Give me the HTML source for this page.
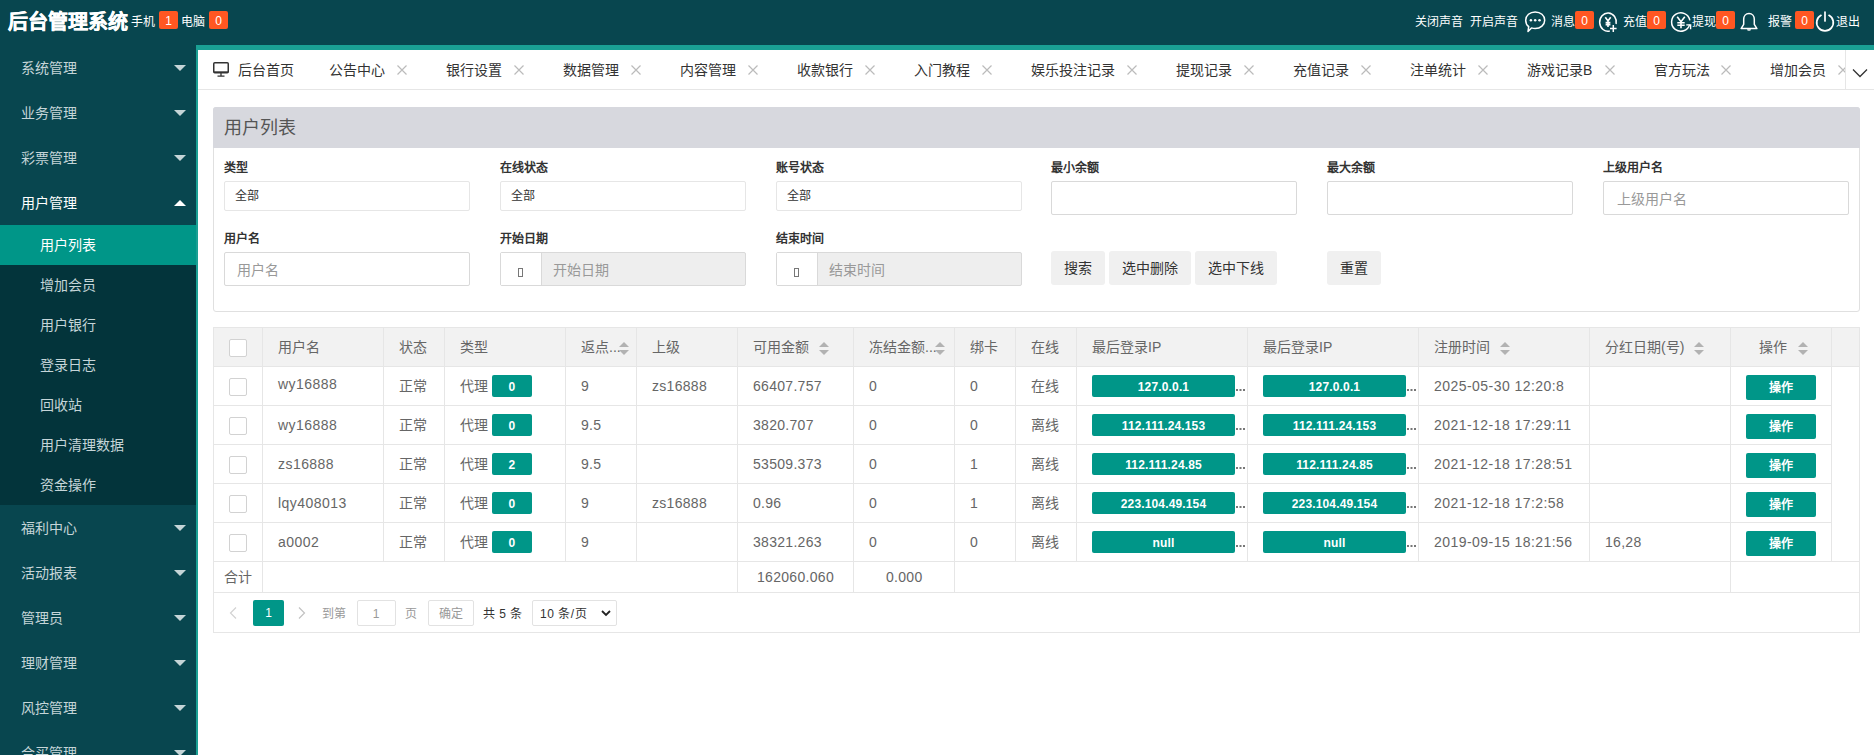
<!DOCTYPE html><html lang="zh-CN"><head><meta charset="utf-8"><title>后台管理系统</title><style>
*{box-sizing:border-box;margin:0;padding:0}
html,body{width:1874px;height:755px;overflow:hidden;background:#fff}
body{font-family:"Liberation Sans",sans-serif;font-size:14px;color:#333;position:relative}
.abs{position:absolute}
#hdr{position:absolute;left:0;top:0;width:1874px;height:45px;background:#08464F}
#side{position:absolute;left:0;top:45px;width:196px;height:710px;background:#08464F;overflow:hidden}
#tealT{position:absolute;left:196px;top:45px;width:1678px;height:5px;background:#1AA094}
#tealL{position:absolute;left:196px;top:45px;width:2px;height:710px;background:#1AA094}
.t{position:absolute;white-space:nowrap;line-height:1}
.w{color:#fff}
.badge{position:absolute;background:#FF5722;color:#fff;font-size:12px;text-align:center;border-radius:2px;width:19px;height:18px;line-height:20px;top:11px}
.mi{position:absolute;left:0;width:196px;height:45px;color:#c5d5d8;font-size:14px;line-height:47px;padding-left:20.500px}
.mi.on{color:#fff}
.smi{position:absolute;left:0;width:196px;height:40px;color:#c5d5d8;font-size:14px;line-height:40px;padding-left:40px;background:#03343B}
.smi.on{background:#009688;color:#fff}
.arr{position:absolute;left:174px;width:0;height:0;border-left:6px solid transparent;border-right:6px solid transparent;border-top:6px solid #c5d5d8}
.arr.up{border-top:none;border-bottom:6px solid #fff}
.tab{position:absolute;top:50px;height:39px;line-height:41px;font-size:14px;color:#333;white-space:nowrap}
.x{position:absolute;top:65px;width:10px;height:10px}
.lbl{position:absolute;font-size:12px;font-weight:bold;color:#333;line-height:12px;white-space:nowrap}
.inp{position:absolute;border:1px solid #e6e6e6;border-radius:2px;background:#fff;width:246px}
.btn{position:absolute;top:251px;height:34px;line-height:34px;background:#f0f0f0;border-radius:3px;text-align:center;font-size:14px;color:#333}
.vl{position:absolute;width:1px;background:#e6e6e6}
.hl{position:absolute;height:1px;background:#e6e6e6;left:213px;width:1647px}
.th{position:absolute;top:328px;height:38px;line-height:38px;font-size:14px;color:#666;white-space:nowrap}
.td{position:absolute;height:38px;line-height:38px;font-size:14px;color:#666;white-space:nowrap;letter-spacing:.3px}
.cb{position:absolute;left:229px;width:18px;height:18px;border:1px solid #d2d2d2;border-radius:2px;background:#fff}
.gb{position:absolute;background:#009688;color:#fff;font-size:12px;font-weight:bold;letter-spacing:.15px;text-align:center;border-radius:2px;height:22px;line-height:24px;white-space:nowrap}
.sa{position:absolute;width:0;height:0;border-left:5px solid transparent;border-right:5px solid transparent}
.sa.u{border-bottom:5px solid #b2b2b2}
.sa.d{border-top:5px solid #b2b2b2}
</style></head><body>
<div id="hdr">
<div class="t w" style="left:8px;top:12px;font-size:20px;font-weight:bold;-webkit-text-stroke:.4px #fff">后台管理系统</div>
<div class="t w" style="left:131px;top:16px;font-size:12px">手机</div>
<div class="badge" style="left:159px">1</div>
<div class="t w" style="left:181px;top:16px;font-size:12px">电脑</div>
<div class="badge" style="left:209px">0</div>
<div class="t w" style="left:1415px;top:16px;font-size:12px">关闭声音</div>
<div class="t w" style="left:1470px;top:16px;font-size:12px">开启声音</div>
<svg class="abs" style="left:1524px;top:10px" width="22" height="23" viewBox="0 0 22 23" fill="none" stroke="#fff" stroke-width="1.5" stroke-linejoin="round"><path d="M11.2 1.9c5.3 0 9.500 3.600 9.500 8.300s-4.200 8.300-9.500 8.300c-1.300 0-2.600-.2-3.700-.6L4 21.500l.7-4.800C2.800 15.200 1.700 12.900 1.700 10.200 1.700 5.500 5.900 1.900 11.200 1.900z"/><circle cx="6.900" cy="10.300" r="1.250" fill="#fff" stroke="none"/><circle cx="11.200" cy="10.300" r="1.250" fill="#fff" stroke="none"/><circle cx="15.500" cy="10.300" r="1.250" fill="#fff" stroke="none"/></svg>
<div class="t w" style="left:1551px;top:16px;font-size:12px">消息</div>
<div class="badge" style="left:1575px">0</div>
<svg class="abs" style="left:1598px;top:10px" width="21" height="23" viewBox="0 0 21 23" fill="none" stroke="#fff" stroke-width="1.500"><path d="M18.100 14A8.300 9.200 0 1 0 11.800 21.100"/><path d="M7.300 7.200l2.700 3.700 2.700-3.700M10 10.900v6M7.600 12.600h4.800M7.600 14.600h4.800" stroke-width="1.600"/><path d="M15.300 15v7M12 18.400h6.600" stroke-width="1.500"/></svg>
<div class="t w" style="left:1623px;top:16px;font-size:12px">充值</div>
<div class="badge" style="left:1647px">0</div>
<svg class="abs" style="left:1670px;top:11px" width="23" height="22" viewBox="0 0 23 22" fill="none" stroke="#fff" stroke-width="1.500"><path d="M19.860 9.300A9.200 9.200 0 1 0 19.650 13.600"/><path d="M16.300 13.900H20.600V18.200" stroke-width="1.400"/><path d="M7.200 5.800l3.800 5 3.800-5M11 10.800v6.400M7.300 11.700h7.400M7.300 14.300h7.400" stroke-width="1.600"/></svg>
<div class="t w" style="left:1692px;top:16px;font-size:12px">提现</div>
<div class="badge" style="left:1716px">0</div>
<svg class="abs" style="left:1739px;top:11px" width="20" height="22" viewBox="0 0 20 22" fill="none" stroke="#fff" stroke-width="1.500"><path d="M10 2.500c3.200 0 5.300 2.500 5.300 5.800v5l2.600 4.300H2.100l2.600-4.300v-5C4.700 5 6.800 2.500 10 2.500z" stroke-linejoin="round"/><path d="M8 18.200a2 1.600 0 0 0 4 0z" fill="#fff" stroke="none"/></svg>
<div class="t w" style="left:1768px;top:16px;font-size:12px">报警</div>
<div class="badge" style="left:1795px">0</div>
<svg class="abs" style="left:1814px;top:10px" width="22" height="23" viewBox="0 0 22 23" fill="none" stroke="#fff" stroke-width="1.700" stroke-linecap="round"><path d="M7 5.300A8.300 8.300 0 1 0 15 5.300"/><path d="M11 2v9"/></svg>
<div class="t w" style="left:1836px;top:16px;font-size:12px">退出</div>
</div>
<div id="side">
<div class="mi" style="top:0px">系统管理</div>
<div class="arr" style="top:20px"></div>
<div class="mi" style="top:45px">业务管理</div>
<div class="arr" style="top:65px"></div>
<div class="mi" style="top:90px">彩票管理</div>
<div class="arr" style="top:110px"></div>
<div class="mi on" style="top:135px">用户管理</div>
<div class="arr up" style="top:155px"></div>
<div class="smi on" style="top:180px">用户列表</div>
<div class="smi" style="top:220px">增加会员</div>
<div class="smi" style="top:260px">用户银行</div>
<div class="smi" style="top:300px">登录日志</div>
<div class="smi" style="top:340px">回收站</div>
<div class="smi" style="top:380px">用户清理数据</div>
<div class="smi" style="top:420px">资金操作</div>
<div class="mi" style="top:460px">福利中心</div>
<div class="arr" style="top:480px"></div>
<div class="mi" style="top:505px">活动报表</div>
<div class="arr" style="top:525px"></div>
<div class="mi" style="top:550px">管理员</div>
<div class="arr" style="top:570px"></div>
<div class="mi" style="top:595px">理财管理</div>
<div class="arr" style="top:615px"></div>
<div class="mi" style="top:640px">风控管理</div>
<div class="arr" style="top:660px"></div>
<div class="mi" style="top:685px">合买管理</div>
<div class="arr" style="top:705px"></div>
</div>
<div id="tealT"></div><div id="tealL"></div>
<div class="abs" style="left:198px;top:89px;width:1676px;height:1px;background:#e6e6e6"></div>
<svg class="abs" style="left:213px;top:62px" width="16" height="15" viewBox="0 0 16 15" fill="none" stroke="#333" stroke-width="1.500"><rect x=".75" y=".75" width="14.500" height="10" rx="1"/><path d="M.75 9.900h14.500" stroke-width="1.200"/><path d="M8 11v2.800M4.500 14.200h7" stroke-width="1.300"/></svg>
<div class="tab" style="left:238px">后台首页</div>
<div class="tab" style="left:329px">公告中心</div>
<svg class="x" style="left:397px" viewBox="0 0 10 10" stroke="#bbb" stroke-width="1.200" fill="none"><path d="M.5.5l9 9M9.500.5l-9 9"/></svg>
<div class="tab" style="left:446px">银行设置</div>
<svg class="x" style="left:514px" viewBox="0 0 10 10" stroke="#bbb" stroke-width="1.200" fill="none"><path d="M.5.5l9 9M9.500.5l-9 9"/></svg>
<div class="tab" style="left:563px">数据管理</div>
<svg class="x" style="left:631px" viewBox="0 0 10 10" stroke="#bbb" stroke-width="1.200" fill="none"><path d="M.5.5l9 9M9.500.5l-9 9"/></svg>
<div class="tab" style="left:680px">内容管理</div>
<svg class="x" style="left:748px" viewBox="0 0 10 10" stroke="#bbb" stroke-width="1.200" fill="none"><path d="M.5.5l9 9M9.500.5l-9 9"/></svg>
<div class="tab" style="left:797px">收款银行</div>
<svg class="x" style="left:865px" viewBox="0 0 10 10" stroke="#bbb" stroke-width="1.200" fill="none"><path d="M.5.5l9 9M9.500.5l-9 9"/></svg>
<div class="tab" style="left:914px">入门教程</div>
<svg class="x" style="left:982px" viewBox="0 0 10 10" stroke="#bbb" stroke-width="1.200" fill="none"><path d="M.5.5l9 9M9.500.5l-9 9"/></svg>
<div class="tab" style="left:1031px">娱乐投注记录</div>
<svg class="x" style="left:1127px" viewBox="0 0 10 10" stroke="#bbb" stroke-width="1.200" fill="none"><path d="M.5.5l9 9M9.500.5l-9 9"/></svg>
<div class="tab" style="left:1176px">提现记录</div>
<svg class="x" style="left:1244px" viewBox="0 0 10 10" stroke="#bbb" stroke-width="1.200" fill="none"><path d="M.5.5l9 9M9.500.5l-9 9"/></svg>
<div class="tab" style="left:1293px">充值记录</div>
<svg class="x" style="left:1361px" viewBox="0 0 10 10" stroke="#bbb" stroke-width="1.200" fill="none"><path d="M.5.5l9 9M9.500.5l-9 9"/></svg>
<div class="tab" style="left:1410px">注单统计</div>
<svg class="x" style="left:1478px" viewBox="0 0 10 10" stroke="#bbb" stroke-width="1.200" fill="none"><path d="M.5.5l9 9M9.500.5l-9 9"/></svg>
<div class="tab" style="left:1527px">游戏记录B</div>
<svg class="x" style="left:1605px" viewBox="0 0 10 10" stroke="#bbb" stroke-width="1.200" fill="none"><path d="M.5.5l9 9M9.500.5l-9 9"/></svg>
<div class="tab" style="left:1654px">官方玩法</div>
<svg class="x" style="left:1721px" viewBox="0 0 10 10" stroke="#bbb" stroke-width="1.200" fill="none"><path d="M.5.5l9 9M9.500.5l-9 9"/></svg>
<div class="tab" style="left:1770px">增加会员</div>
<svg class="x" style="left:1838px" viewBox="0 0 10 10" stroke="#bbb" stroke-width="1.200" fill="none"><path d="M.5.5l9 9M9.500.5l-9 9"/></svg>
<div class="abs" style="left:1845px;top:50px;width:29px;height:40px;background:#fff;border-left:1px solid #e6e6e6;border-bottom:1px solid #e6e6e6"></div>
<svg class="abs" style="left:1852px;top:68px" width="16" height="10" viewBox="0 0 16 10" fill="none" stroke="#333" stroke-width="1.300"><path d="M1 1.500l7 7 7-7"/></svg>
<div class="abs" style="left:213px;top:107px;width:1647px;height:205px;border:1px solid #e0e0e0;border-radius:3px;background:#fff"></div>
<div class="abs" style="left:213px;top:107px;width:1647px;height:41px;background:#D7D8DE;border-radius:3px 3px 0 0"></div>
<div class="t" style="left:224px;top:119px;font-size:18px;color:#555">用户列表</div>
<div class="lbl" style="left:224px;top:162px">类型</div>
<div class="lbl" style="left:500px;top:162px">在线状态</div>
<div class="lbl" style="left:776px;top:162px">账号状态</div>
<div class="lbl" style="left:1051px;top:162px">最小余额</div>
<div class="lbl" style="left:1327px;top:162px">最大余额</div>
<div class="lbl" style="left:1603px;top:162px">上级用户名</div>
<div class="inp" style="left:224px;top:181px;height:30px"></div>
<div class="t" style="left:235px;top:190px;font-size:12px;color:#333">全部</div>
<div class="inp" style="left:500px;top:181px;height:30px"></div>
<div class="t" style="left:511px;top:190px;font-size:12px;color:#333">全部</div>
<div class="inp" style="left:776px;top:181px;height:30px"></div>
<div class="t" style="left:787px;top:190px;font-size:12px;color:#333">全部</div>
<div class="inp" style="left:1051px;top:181px;height:34px;border-color:#d9d9d9"></div>
<div class="inp" style="left:1327px;top:181px;height:34px;border-color:#d9d9d9"></div>
<div class="inp" style="left:1603px;top:181px;height:34px;border-color:#d9d9d9"></div>
<div class="t" style="left:1617px;top:192px;font-size:14px;color:#999">上级用户名</div>
<div class="lbl" style="left:224px;top:233px">用户名</div>
<div class="lbl" style="left:500px;top:233px">开始日期</div>
<div class="lbl" style="left:776px;top:233px">结束时间</div>
<div class="inp" style="left:224px;top:252px;height:34px;border-color:#d9d9d9"></div>
<div class="t" style="left:237px;top:263px;font-size:14px;color:#999">用户名</div>
<div class="inp" style="left:500px;top:252px;height:34px;border-color:#d9d9d9;background:#eee"></div>
<div class="abs" style="left:501px;top:253px;width:41px;height:32px;background:#fff;border-right:1px solid #d9d9d9"></div>
<div class="abs" style="left:518px;top:268px;width:5px;height:9px;border:1px solid #777"></div>
<div class="t" style="left:553px;top:263px;font-size:14px;color:#999">开始日期</div>
<div class="inp" style="left:776px;top:252px;height:34px;border-color:#d9d9d9;background:#eee"></div>
<div class="abs" style="left:777px;top:253px;width:41px;height:32px;background:#fff;border-right:1px solid #d9d9d9"></div>
<div class="abs" style="left:794px;top:268px;width:5px;height:9px;border:1px solid #777"></div>
<div class="t" style="left:829px;top:263px;font-size:14px;color:#999">结束时间</div>
<div class="btn" style="left:1051px;width:54px">搜索</div>
<div class="btn" style="left:1109px;width:82px">选中删除</div>
<div class="btn" style="left:1195px;width:82px">选中下线</div>
<div class="btn" style="left:1327px;width:54px">重置</div>
<div class="abs" style="left:213px;top:327px;width:1647px;height:306px;border:1px solid #e6e6e6;background:#fff"></div>
<div class="abs" style="left:214px;top:328px;width:1645px;height:38px;background:#f2f2f2"></div>
<div class="hl" style="top:366px;width:1647px"></div>
<div class="hl" style="top:405px;width:1619px"></div>
<div class="hl" style="top:444px;width:1619px"></div>
<div class="hl" style="top:483px;width:1619px"></div>
<div class="hl" style="top:522px;width:1619px"></div>
<div class="hl" style="top:561px"></div><div class="hl" style="top:592px"></div>
<div class="vl" style="left:262px;top:328px;height:233px"></div>
<div class="vl" style="left:383px;top:328px;height:233px"></div>
<div class="vl" style="left:444px;top:328px;height:233px"></div>
<div class="vl" style="left:565px;top:328px;height:233px"></div>
<div class="vl" style="left:636px;top:328px;height:233px"></div>
<div class="vl" style="left:737px;top:328px;height:233px"></div>
<div class="vl" style="left:853px;top:328px;height:233px"></div>
<div class="vl" style="left:954px;top:328px;height:233px"></div>
<div class="vl" style="left:1015px;top:328px;height:233px"></div>
<div class="vl" style="left:1076px;top:328px;height:233px"></div>
<div class="vl" style="left:1247px;top:328px;height:233px"></div>
<div class="vl" style="left:1418px;top:328px;height:233px"></div>
<div class="vl" style="left:1589px;top:328px;height:233px"></div>
<div class="vl" style="left:1730px;top:328px;height:233px"></div>
<div class="vl" style="left:1831px;top:328px;height:233px"></div>
<div class="vl" style="left:262px;top:562px;height:30px"></div>
<div class="vl" style="left:737px;top:562px;height:30px"></div>
<div class="vl" style="left:853px;top:562px;height:30px"></div>
<div class="vl" style="left:954px;top:562px;height:30px"></div>
<div class="vl" style="left:1730px;top:562px;height:30px"></div>
<div class="th" style="left:278px">用户名</div>
<div class="th" style="left:399px">状态</div>
<div class="th" style="left:460px">类型</div>
<div class="th" style="left:581px">返点...</div>
<div class="th" style="left:652px">上级</div>
<div class="th" style="left:753px">可用金额</div>
<div class="th" style="left:869px">冻结金额...</div>
<div class="th" style="left:970px">绑卡</div>
<div class="th" style="left:1031px">在线</div>
<div class="th" style="left:1092px">最后登录IP</div>
<div class="th" style="left:1263px">最后登录IP</div>
<div class="th" style="left:1434px">注册时间</div>
<div class="th" style="left:1605px">分红日期(号)</div>
<div class="th" style="left:1759px">操作</div>
<div class="sa u" style="left:619px;top:342px"></div><div class="sa d" style="left:619px;top:350px"></div>
<div class="sa u" style="left:819px;top:342px"></div><div class="sa d" style="left:819px;top:350px"></div>
<div class="sa u" style="left:935px;top:342px"></div><div class="sa d" style="left:935px;top:350px"></div>
<div class="sa u" style="left:1500px;top:342px"></div><div class="sa d" style="left:1500px;top:350px"></div>
<div class="sa u" style="left:1694px;top:342px"></div><div class="sa d" style="left:1694px;top:350px"></div>
<div class="sa u" style="left:1798px;top:342px"></div><div class="sa d" style="left:1798px;top:350px"></div>
<div class="cb" style="top:339px"></div>
<div class="cb" style="top:378px"></div>
<div class="td" style="left:278px;top:365px;letter-spacing:0.45px">wy16888</div>
<div class="td" style="left:399px;top:367px">正常</div>
<div class="td" style="left:460px;top:367px">代理</div>
<div class="td" style="left:581px;top:367px">9</div>
<div class="td" style="left:652px;top:367px">zs16888</div>
<div class="td" style="left:753px;top:367px">66407.757</div>
<div class="td" style="left:869px;top:367px">0</div>
<div class="td" style="left:970px;top:367px">0</div>
<div class="td" style="left:1031px;top:367px">在线</div>
<div class="td" style="left:1434px;top:367px;letter-spacing:0.45px">2025-05-30 12:20:8</div>
<div class="gb" style="left:492px;top:375px;width:40px">0</div>
<div class="gb" style="left:1092px;top:375px;width:143px">127.0.0.1</div>
<div class="abs" style="left:1236px;top:389px;width:2px;height:2px;background:#777;box-shadow:3.500px 0 #777,7px 0 #777"></div>
<div class="gb" style="left:1263px;top:375px;width:143px">127.0.0.1</div>
<div class="abs" style="left:1407px;top:389px;width:2px;height:2px;background:#777;box-shadow:3.500px 0 #777,7px 0 #777"></div>
<div class="gb" style="left:1746px;top:375px;width:70px;height:25px;line-height:27px">操作</div>
<div class="cb" style="top:417px"></div>
<div class="td" style="left:278px;top:406px;letter-spacing:0.45px">wy16888</div>
<div class="td" style="left:399px;top:406px">正常</div>
<div class="td" style="left:460px;top:406px">代理</div>
<div class="td" style="left:581px;top:406px">9.5</div>
<div class="td" style="left:753px;top:406px">3820.707</div>
<div class="td" style="left:869px;top:406px">0</div>
<div class="td" style="left:970px;top:406px">0</div>
<div class="td" style="left:1031px;top:406px">离线</div>
<div class="td" style="left:1434px;top:406px;letter-spacing:0.45px">2021-12-18 17:29:11</div>
<div class="gb" style="left:492px;top:414px;width:40px">0</div>
<div class="gb" style="left:1092px;top:414px;width:143px">112.111.24.153</div>
<div class="abs" style="left:1236px;top:428px;width:2px;height:2px;background:#777;box-shadow:3.500px 0 #777,7px 0 #777"></div>
<div class="gb" style="left:1263px;top:414px;width:143px">112.111.24.153</div>
<div class="abs" style="left:1407px;top:428px;width:2px;height:2px;background:#777;box-shadow:3.500px 0 #777,7px 0 #777"></div>
<div class="gb" style="left:1746px;top:414px;width:70px;height:25px;line-height:27px">操作</div>
<div class="cb" style="top:456px"></div>
<div class="td" style="left:278px;top:445px;letter-spacing:0.45px">zs16888</div>
<div class="td" style="left:399px;top:445px">正常</div>
<div class="td" style="left:460px;top:445px">代理</div>
<div class="td" style="left:581px;top:445px">9.5</div>
<div class="td" style="left:753px;top:445px">53509.373</div>
<div class="td" style="left:869px;top:445px">0</div>
<div class="td" style="left:970px;top:445px">1</div>
<div class="td" style="left:1031px;top:445px">离线</div>
<div class="td" style="left:1434px;top:445px;letter-spacing:0.45px">2021-12-18 17:28:51</div>
<div class="gb" style="left:492px;top:453px;width:40px">2</div>
<div class="gb" style="left:1092px;top:453px;width:143px">112.111.24.85</div>
<div class="abs" style="left:1236px;top:467px;width:2px;height:2px;background:#777;box-shadow:3.500px 0 #777,7px 0 #777"></div>
<div class="gb" style="left:1263px;top:453px;width:143px">112.111.24.85</div>
<div class="abs" style="left:1407px;top:467px;width:2px;height:2px;background:#777;box-shadow:3.500px 0 #777,7px 0 #777"></div>
<div class="gb" style="left:1746px;top:453px;width:70px;height:25px;line-height:27px">操作</div>
<div class="cb" style="top:495px"></div>
<div class="td" style="left:278px;top:484px;letter-spacing:0.45px">lqy408013</div>
<div class="td" style="left:399px;top:484px">正常</div>
<div class="td" style="left:460px;top:484px">代理</div>
<div class="td" style="left:581px;top:484px">9</div>
<div class="td" style="left:652px;top:484px">zs16888</div>
<div class="td" style="left:753px;top:484px">0.96</div>
<div class="td" style="left:869px;top:484px">0</div>
<div class="td" style="left:970px;top:484px">1</div>
<div class="td" style="left:1031px;top:484px">离线</div>
<div class="td" style="left:1434px;top:484px;letter-spacing:0.45px">2021-12-18 17:2:58</div>
<div class="gb" style="left:492px;top:492px;width:40px">0</div>
<div class="gb" style="left:1092px;top:492px;width:143px">223.104.49.154</div>
<div class="abs" style="left:1236px;top:506px;width:2px;height:2px;background:#777;box-shadow:3.500px 0 #777,7px 0 #777"></div>
<div class="gb" style="left:1263px;top:492px;width:143px">223.104.49.154</div>
<div class="abs" style="left:1407px;top:506px;width:2px;height:2px;background:#777;box-shadow:3.500px 0 #777,7px 0 #777"></div>
<div class="gb" style="left:1746px;top:492px;width:70px;height:25px;line-height:27px">操作</div>
<div class="cb" style="top:534px"></div>
<div class="td" style="left:278px;top:523px;letter-spacing:0.45px">a0002</div>
<div class="td" style="left:399px;top:523px">正常</div>
<div class="td" style="left:460px;top:523px">代理</div>
<div class="td" style="left:581px;top:523px">9</div>
<div class="td" style="left:753px;top:523px">38321.263</div>
<div class="td" style="left:869px;top:523px">0</div>
<div class="td" style="left:970px;top:523px">0</div>
<div class="td" style="left:1031px;top:523px">离线</div>
<div class="td" style="left:1434px;top:523px;letter-spacing:0.45px">2019-09-15 18:21:56</div>
<div class="td" style="left:1605px;top:523px">16,28</div>
<div class="gb" style="left:492px;top:531px;width:40px">0</div>
<div class="gb" style="left:1092px;top:531px;width:143px">null</div>
<div class="abs" style="left:1236px;top:545px;width:2px;height:2px;background:#777;box-shadow:3.500px 0 #777,7px 0 #777"></div>
<div class="gb" style="left:1263px;top:531px;width:143px">null</div>
<div class="abs" style="left:1407px;top:545px;width:2px;height:2px;background:#777;box-shadow:3.500px 0 #777,7px 0 #777"></div>
<div class="gb" style="left:1746px;top:531px;width:70px;height:25px;line-height:27px">操作</div>
<div class="t" style="left:224px;top:570px;font-size:14px;color:#666">合计</div>
<div class="td" style="left:757px;top:558px">162060.060</div>
<div class="td" style="left:886px;top:558px">0.000</div>
<svg class="abs" style="left:229px;top:607px" width="8" height="12" viewBox="0 0 8 12" fill="none" stroke="#d2d2d2" stroke-width="1.200"><path d="M7 .5L1.500 6 7 11.500"/></svg>
<div class="abs" style="left:253px;top:600px;width:31px;height:26px;line-height:26px;background:#009688;color:#fff;font-size:12px;text-align:center;border-radius:2px">1</div>
<svg class="abs" style="left:298px;top:607px" width="8" height="12" viewBox="0 0 8 12" fill="none" stroke="#c2c2c2" stroke-width="1.200"><path d="M1 .5L6.500 6 1 11.500"/></svg>
<div class="t" style="left:322px;top:608px;font-size:12px;color:#999">到第</div>
<div class="abs" style="left:356.500px;top:600px;width:39px;height:26px;line-height:26px;border:1px solid #e2e2e2;border-radius:2px;text-align:center;font-size:12px;color:#999">1</div>
<div class="t" style="left:405px;top:608px;font-size:12px;color:#999">页</div>
<div class="abs" style="left:428px;top:600px;width:46px;height:26px;line-height:26px;border:1px solid #e2e2e2;border-radius:2px;text-align:center;font-size:12px;color:#999">确定</div>
<div class="t" style="left:483px;top:608px;font-size:12px;color:#333;letter-spacing:.5px">共 5 条</div>
<div class="abs" style="left:532px;top:600px;width:85px;height:26px;border:1px solid #e2e2e2;border-radius:2px"></div>
<div class="t" style="left:540px;top:608px;font-size:12px;color:#333;letter-spacing:.5px">10 条/页</div>
<svg class="abs" style="left:601px;top:610px" width="10" height="7" viewBox="0 0 10 7" fill="none" stroke="#222" stroke-width="1.800"><path d="M1 1l4 4 4-4"/></svg>
</body></html>
